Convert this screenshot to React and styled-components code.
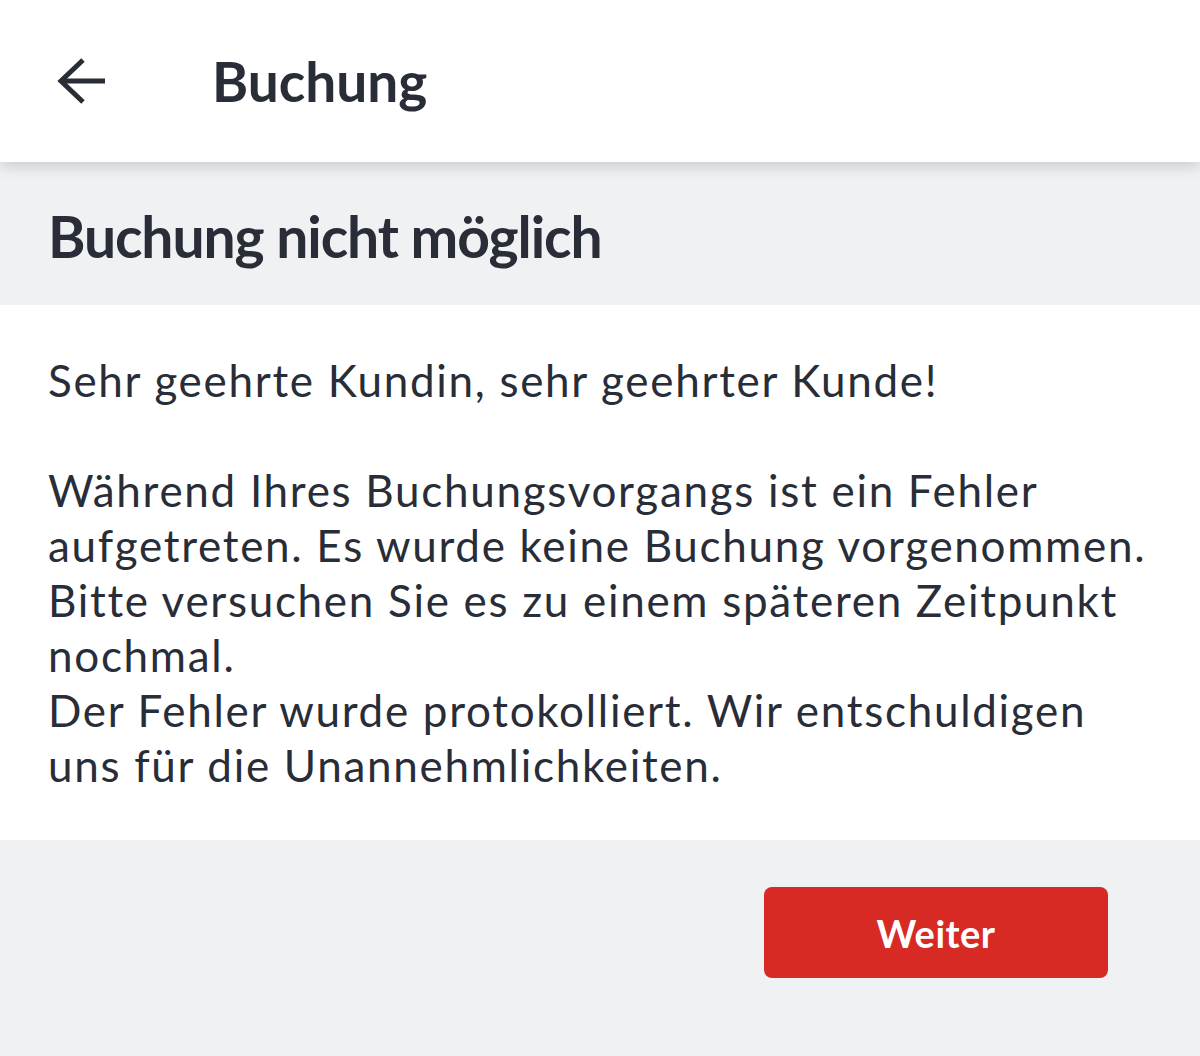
import React from 'react';
import styled, { createGlobalStyle } from 'styled-components';

const GlobalStyle = createGlobalStyle`
  html, body {
    margin: 0;
    padding: 0;
    background: #f0f1f3;
  }
  body {
    font-family: Lato, "Noto Sans", "Liberation Sans", sans-serif;
    color: #282d37;
  }
`;

const Page = styled.div`
  display: flex;
  flex-direction: column;
  min-height: 1056px;
  background: #f0f1f3;
`;

const Header = styled.header`
  position: relative;
  z-index: 1;
  height: 162px;
  display: flex;
  align-items: center;
  padding-left: 56px;
  background: #ffffff;
  box-shadow: 0 4px 14px rgba(0, 0, 0, 0.16);
`;

const BackButton = styled.button`
  display: flex;
  align-items: center;
  justify-content: center;
  width: 50px;
  height: 48px;
  padding: 0;
  border: none;
  background: none;
  color: #282d37;
  cursor: pointer;
`;

const HeaderTitle = styled.h1`
  margin: 0 0 0 106px;
  font-size: 55px;
  font-weight: 700;
  letter-spacing: 0;
`;

const TitleBand = styled.div`
  height: 143px;
  display: flex;
  align-items: center;
  padding: 0 48px;
  background: #f0f1f3;
`;

const Title = styled.h2`
  margin: 4px 0 0;
  font-size: 57px;
  font-weight: 700;
  letter-spacing: -1.1px;
`;

const Body = styled.section`
  height: 535px;
  box-sizing: border-box;
  padding: 48px 40px 0 48px;
  background: #ffffff;
`;

const Text = styled.p`
  margin: 0;
  font-size: 44px;
  line-height: 55px;
  font-weight: 400;
  letter-spacing: 1.7px;
  white-space: pre-line;
`;

const Footer = styled.footer`
  flex: 1;
  display: flex;
  justify-content: flex-end;
  align-items: flex-start;
  padding: 47px 92px 0 0;
`;

const PrimaryButton = styled.button`
  width: 344px;
  height: 91px;
  border: none;
  border-radius: 8px;
  background: #d82a24;
  color: #ffffff;
  font-family: Lato, "Noto Sans", sans-serif;
  font-size: 38px;
  font-weight: 700;
  letter-spacing: 0.5px;
  cursor: pointer;
`;

const message = `Sehr geehrte Kundin, sehr geehrter Kunde!

Während Ihres Buchungsvorgangs ist ein Fehler aufgetreten. Es wurde keine Buchung vorgenommen. Bitte versuchen Sie es zu einem späteren Zeitpunkt nochmal.
Der Fehler wurde protokolliert. Wir entschuldigen uns für die Unannehmlichkeiten.`;

const App = () => {
  return (
    <>
      <GlobalStyle />
      <Page>
        <Header>
          <BackButton aria-label="Zurück">
            <svg width="50" height="48" viewBox="0 0 50 48" fill="none" stroke="currentColor" strokeWidth="5">
              <path d="M49 24H6" />
              <path d="M27 3L5 24l22 21" strokeLinejoin="miter" />
            </svg>
          </BackButton>
          <HeaderTitle>Buchung</HeaderTitle>
        </Header>
        <TitleBand>
          <Title>Buchung nicht möglich</Title>
        </TitleBand>
        <Body>
          <Text>{message}</Text>
        </Body>
        <Footer>
          <PrimaryButton>Weiter</PrimaryButton>
        </Footer>
      </Page>
    </>
  );
};

export default App;
